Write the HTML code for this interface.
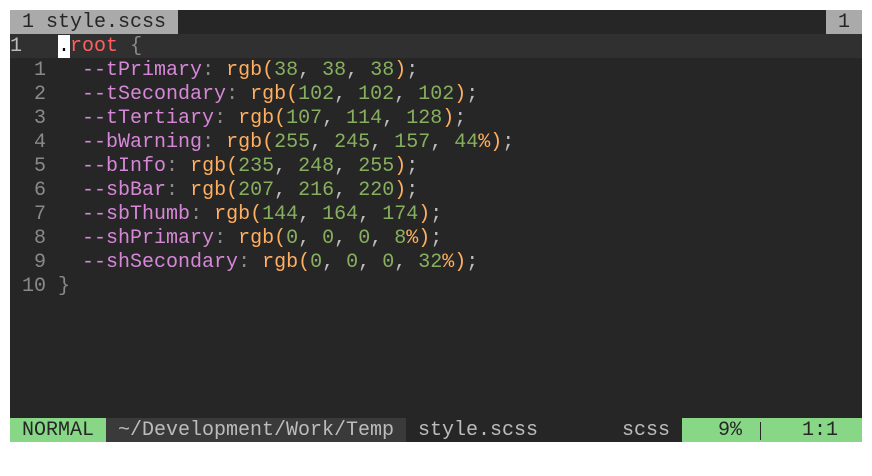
<!DOCTYPE html>
<html><head><style>
html,body{margin:0;padding:0;background:#fff;width:872px;height:476px;overflow:hidden}
#t{position:absolute;left:10px;top:10px;width:852px;height:432px;background:#262626;font-family:"Liberation Mono",monospace;font-size:20px;font-weight:normal;color:#bcbcbc}
.l{position:absolute;left:0;height:24px;line-height:26px;white-space:pre;width:852px;overflow:hidden}
.p{color:#d787d7}.f{color:#ffaf5f}.n{color:#87af5f}.r{color:#ff5f5f}.g{color:#8a8a8a}.c{color:#bcbcbc}
.ln{color:#8a8a8a}
.b{position:absolute;top:0;height:24px}
</style></head><body><div id="t">
<div class="l" style="top:0"><span class="b" style="left:0;width:168px;background:#aaaaaa;color:#262626"> 1 style.scss </span><span class="b" style="left:816px;width:36px;background:#aaaaaa;color:#262626"> 1 </span></div>
<div class="l" style="top:24px;background:#303030"><span style="color:#bcbcbc">1   </span><span style="background:#fff;color:#000">.</span><span class="r">root</span> <span class="g">{</span></div>
<div class="l" style="top:48px"><span class="ln">  1 </span>  <span class="p">--tPrimary</span><span class="g">:</span> <span class="f">rgb(</span><span class="n">38</span><span class="c">,</span> <span class="n">38</span><span class="c">,</span> <span class="n">38</span><span class="f">)</span><span class="c">;</span></div>
<div class="l" style="top:72px"><span class="ln">  2 </span>  <span class="p">--tSecondary</span><span class="g">:</span> <span class="f">rgb(</span><span class="n">102</span><span class="c">,</span> <span class="n">102</span><span class="c">,</span> <span class="n">102</span><span class="f">)</span><span class="c">;</span></div>
<div class="l" style="top:96px"><span class="ln">  3 </span>  <span class="p">--tTertiary</span><span class="g">:</span> <span class="f">rgb(</span><span class="n">107</span><span class="c">,</span> <span class="n">114</span><span class="c">,</span> <span class="n">128</span><span class="f">)</span><span class="c">;</span></div>
<div class="l" style="top:120px"><span class="ln">  4 </span>  <span class="p">--bWarning</span><span class="g">:</span> <span class="f">rgb(</span><span class="n">255</span><span class="c">,</span> <span class="n">245</span><span class="c">,</span> <span class="n">157</span><span class="c">,</span> <span class="n">44</span><span class="f">%)</span><span class="c">;</span></div>
<div class="l" style="top:144px"><span class="ln">  5 </span>  <span class="p">--bInfo</span><span class="g">:</span> <span class="f">rgb(</span><span class="n">235</span><span class="c">,</span> <span class="n">248</span><span class="c">,</span> <span class="n">255</span><span class="f">)</span><span class="c">;</span></div>
<div class="l" style="top:168px"><span class="ln">  6 </span>  <span class="p">--sbBar</span><span class="g">:</span> <span class="f">rgb(</span><span class="n">207</span><span class="c">,</span> <span class="n">216</span><span class="c">,</span> <span class="n">220</span><span class="f">)</span><span class="c">;</span></div>
<div class="l" style="top:192px"><span class="ln">  7 </span>  <span class="p">--sbThumb</span><span class="g">:</span> <span class="f">rgb(</span><span class="n">144</span><span class="c">,</span> <span class="n">164</span><span class="c">,</span> <span class="n">174</span><span class="f">)</span><span class="c">;</span></div>
<div class="l" style="top:216px"><span class="ln">  8 </span>  <span class="p">--shPrimary</span><span class="g">:</span> <span class="f">rgb(</span><span class="n">0</span><span class="c">,</span> <span class="n">0</span><span class="c">,</span> <span class="n">0</span><span class="c">,</span> <span class="n">8</span><span class="f">%)</span><span class="c">;</span></div>
<div class="l" style="top:240px"><span class="ln">  9 </span>  <span class="p">--shSecondary</span><span class="g">:</span> <span class="f">rgb(</span><span class="n">0</span><span class="c">,</span> <span class="n">0</span><span class="c">,</span> <span class="n">0</span><span class="c">,</span> <span class="n">32</span><span class="f">%)</span><span class="c">;</span></div>
<div class="l" style="top:264px"><span class="ln"> 10 </span><span class="g">}</span></div>
<div class="l" style="top:408px;color:#bcbcbc">
<span class="b" style="left:0;width:96px;background:#87d787;color:#262626"> NORMAL </span>
<span class="b" style="left:96px;width:300px;background:#3a3a3a;color:#bcbcbc"> ~/Development/Work/Temp </span>
<span class="b" style="left:408px">style.scss</span>
<span class="b" style="left:612px">scss</span>
<span class="b" style="left:672px;width:180px;background:#87d787;color:#262626"></span>
<span class="b" style="left:708px;color:#262626">9%</span>
<span class="b" style="left:750px;top:4px;width:1px;height:18px;background:#262626"></span>
<span class="b" style="left:792px;color:#262626">1:1</span>
</div>
</div></body></html>
